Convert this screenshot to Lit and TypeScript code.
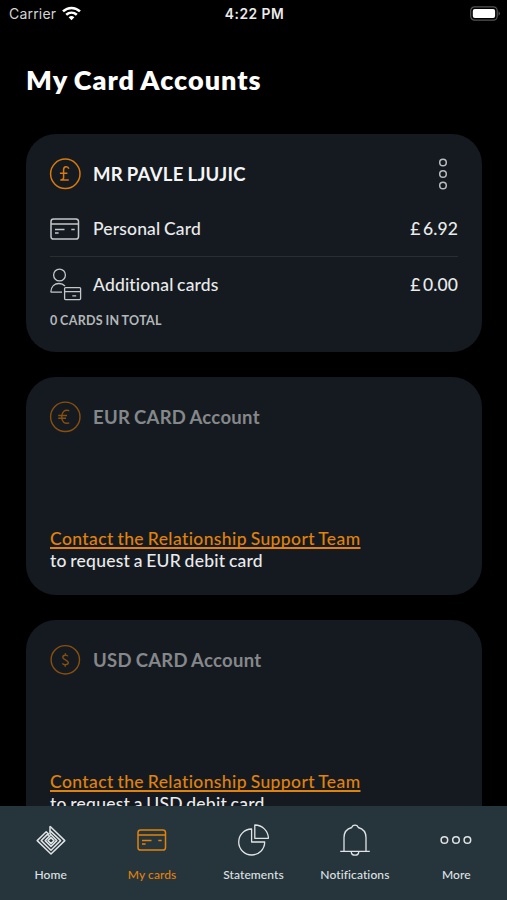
import { LitElement, html, css, svg } from "lit";
import { customElement, property } from "lit/decorators.js";

const cardGlyph = svg`
  <rect x="1" y="1" width="27.5" height="20" rx="2.6"/>
  <path d="M1 6.1H28.5M5 11.5H14.5M5 15H8.6M21.3 11.5H24.7"/>`;

const glyphs: Record<string, unknown> = {
  home: svg`<svg width="30" height="32" viewBox="0 0 30 32" stroke-width="1.5">
    <path d="M14 2.2 28.8 16.6 15 30 1.2 16.6 10.2 7.8 13 10.4"/>
    <path d="M14 2.2V6.6L24.6 16.6 15 26.2 5.2 16.6 11.4 10.4 12.8 11.6"/>
    <path d="M14 6.6V9.8L20.8 16.6 15 22.4 9.2 16.6 14.4 11.4"/>
    <path d="M15 13.6 18 16.6 15 19.6 12 16.6Z"/></svg>`,
  cards: svg`<svg width="30" height="22" viewBox="0 0 30 22" stroke-width="1.5">${cardGlyph}</svg>`,
  statements: svg`<svg width="34" height="34" viewBox="0 0 34 34" stroke-width="1.3">
    <path d="M15.6 6A13 13 0 1 0 28.7 19H15.6ZM18.8 2A13.5 13.5 0 0 1 32.4 15.3H18.8Z"/></svg>`,
  bell: svg`<svg width="32" height="34" viewBox="0 0 32 34" stroke-width="1.3">
    <path d="M1.2 28.4H30.8M5 28.2V14.4C5 9 8.2 5.8 12.8 4.5 13.4 1.3 18.6 1.3 19.2 4.5 23.8 5.8 27 9 27 14.4V28.2M12.2 28.6C12.4 33.4 19.6 33.4 19.8 28.6"/></svg>`,
  more: svg`<svg width="32" height="10" viewBox="0 0 32 10" stroke-width="1.5">
    <circle cx="4.4" cy="5" r="3.3"/><circle cx="16" cy="5" r="3.3"/><circle cx="27.4" cy="5" r="3.3"/></svg>`,
  kebab: svg`<svg width="10" height="34" viewBox="0 0 10 34" stroke-width="1.5">
    <circle cx="5" cy="5.5" r="3.3"/><circle cx="5" cy="17" r="3.3"/><circle cx="5" cy="28.5" r="3.3"/></svg>`,
  person: svg`<svg width="32" height="33" viewBox="0 0 32 33" stroke-width="1.3">
    <circle cx="9.5" cy="7" r="5.9"/>
    <path d="M.8 24.2C1 18.5 4.6 15.5 9 15.5 11.6 15.5 13.6 16.5 15 18M.8 24.2H12"/>
    <rect x="14.6" y="19.6" width="16" height="12" rx="1"/><path d="M14.6 23.6H30.6M22.3 27.8H26.2"/></svg>`,
  gbp: svg`<svg width="32" height="32" viewBox="0 0 32 32" stroke-width="1.5">
    <circle cx="15.3" cy="15.8" r="14.7"/><path d="M18.8 10.8C18 8 13.6 8 13.6 11.8V19.5Q13.6 21.6 10.8 21.9H18.8M9.9 15.2H17.4"/></svg>`,
  eur: svg`<svg width="32" height="32" viewBox="0 0 32 32" stroke-width="1.4">
    <circle cx="15.3" cy="15.8" r="14.7"/><path d="M19.3 9.7C14.5 8.3 11.7 11 11.7 15.8S14.5 23.3 19.3 21.9M8.2 14.5H17M8.2 17.2H16"/></svg>`,
  usd: svg`<svg width="32" height="32" viewBox="0 0 32 32" stroke-width="1.4">
    <circle cx="15.3" cy="15.8" r="14.2"/><path d="M17.8 12.3C17 10.6 12.8 10.8 12.8 13.2 12.8 15.8 18.3 15.8 18.3 18.6 18.3 21 13.6 21.4 12.4 19.4M15.4 9.3V11.2M15.2 20.8V22.7"/></svg>`,
};

@customElement("ui-icon")
class UiIcon extends LitElement {
  @property() name = "";
  static styles = css`
    :host { display: flex; }
    svg { display: block; fill: none; stroke: currentColor; stroke-linejoin: round; overflow: visible; }
  `;
  render() { return glyphs[this.name]; }
}

@customElement("status-bar")
class StatusBar extends LitElement {
  static styles = css`
    :host { display: grid; grid-template-columns: 1fr auto 1fr; align-items: center; height: 27px; padding: 0 6px 1px 9px; font-family: Inter, sans-serif; font-size: 14px; color: #d4d4d4; }
    .left { display: flex; align-items: center; gap: 6px; letter-spacing: .2px; }
    .time { font-weight: 600; font-size: 13.8px; letter-spacing: .5px; color: #ececec; margin-right: 1px; }
    .battery { justify-self: end; margin-top: -1px; }
    svg { display: block; }
  `;
  render() {
    return html`
      <div class="left"><span>Carrier</span>
        <svg width="19" height="15" viewBox="0 0 19 15" fill="none" stroke="#fff" stroke-width="2.6">
          <path d="M1 5.4C6 .8 13 .8 18 5.4M4.2 8.8C7.4 6 11.6 6 14.8 8.8"/>
          <path d="M6.6 11.2Q9.5 8.9 12.4 11.2L9.5 14.2Z" fill="#fff" stroke="none"/></svg></div>
      <div class="time">4:22 PM</div>
      <svg class="battery" width="31" height="15" viewBox="0 0 31 15">
        <rect x=".7" y=".9" width="26.5" height="13.2" rx="3.8" fill="none" stroke="#555" stroke-width="1.2"/>
        <rect x="2.8" y="3" width="22.3" height="9" rx="2" fill="#fff"/>
        <path d="M28.6 5.2Q31 7.5 28.6 9.8Z" fill="#666"/></svg>`;
  }
}

const cardStyles = css`
  :host { display: block; }
  .card { box-sizing: border-box; height: 218px; padding: 24px; border-radius: 30px; background: #151a20; display: flex; flex-direction: column; }
  .head { display: grid; grid-template-columns: 43px 1fr auto; align-items: center; height: 32px; }
  .title { font-size: 18.5px; font-weight: 700; letter-spacing: .3px; word-spacing: -1px; white-space: nowrap; }
`;

@customElement("account-card")
class AccountCard extends LitElement {
  static styles = [cardStyles, css`
    .card { padding-top: 23px; }
    .icon { color: #d87a0c; }
    .title { color: #f4f5f6; }
    .menu { color: #b9bcbf; margin-right: 10px; }
    .row { display: grid; grid-template-columns: 43px 1fr auto; align-items: center; font-size: 17.5px; font-weight: 500; color: #e9ebec; }
    .row ui-icon { color: #c3c7ca; }
    .personal { height: 68px; border-bottom: 1px solid #292e33; box-sizing: border-box; padding-top: 12px; }
    .additional { height: 55px; margin-bottom: 2px; }
    .total { font-size: 12.5px; font-weight: 700; line-height: 14px; color: #b4b7ba; letter-spacing: .3px; word-spacing: -.8px; }
    .pl { letter-spacing: .16px; word-spacing: -1px; }
    .al { letter-spacing: .16px; word-spacing: -1px; }
    .amount { letter-spacing: .1px; word-spacing: -2px; }
  `];
  render() {
    return html`<section class="card">
      <div class="head"><ui-icon class="icon" name="gbp"></ui-icon><span class="title">MR PAVLE LJUJIC</span><ui-icon class="menu" name="kebab"></ui-icon></div>
      <div class="row personal"><ui-icon name="cards"></ui-icon><span class="pl">Personal Card</span><span class="amount">£ 6.92</span></div>
      <div class="row additional"><ui-icon name="person"></ui-icon><span class="al">Additional cards</span><span class="amount">£ 0.00</span></div>
      <div class="total">0 CARDS IN TOTAL</div>
    </section>`;
  }
}

@customElement("request-card")
class RequestCard extends LitElement {
  @property() currency = "EUR";
  static styles = [cardStyles, css`
    .card { padding-bottom: 23px; }
    .icon { color: #88500f; }
    .title { color: #85888b; }
    .note { margin-top: auto; font-size: 17.5px; font-weight: 500; line-height: 22px; color: #e9ebec; white-space: nowrap; word-spacing: -1px; }
    .link { color: #e0820c; letter-spacing: .39px; text-decoration: underline; text-decoration-thickness: 1.5px; text-underline-offset: 2px; text-decoration-skip-ink: none; }
    .rq { letter-spacing: .22px; }
  `];
  render() {
    return html`<section class="card">
      <div class="head"><ui-icon class="icon" name=${this.currency.toLowerCase()}></ui-icon><span class="title">${this.currency} CARD Account</span></div>
      <div class="note"><div><span class="link">Contact the Relationship Support Team</span></div><div class="rq">to request a ${this.currency} debit card</div></div>
    </section>`;
  }
}

@customElement("tab-bar")
class TabBar extends LitElement {
  static styles = css`
    :host { display: grid; grid-template-columns: repeat(5, 1fr); height: 94px; background: #26343b; color: #dfe3e5; flex: none; }
    .tab { display: flex; flex-direction: column; align-items: center; }
    .glyph { height: 68px; display: flex; align-items: center; }
    .label { font-size: 12px; line-height: 16px; margin-top: -7px; font-weight: 500; letter-spacing: .1px; white-space: nowrap; }
    .active { color: #e0820c; }
  `;
  render() {
    const tabs = [["home", "Home"], ["cards", "My cards"], ["statements", "Statements"], ["bell", "Notifications"], ["more", "More"]];
    return tabs.map(([icon, label]) => html`<div class="tab ${icon === "cards" ? "active" : ""}">
      <div class="glyph"><ui-icon name=${icon}></ui-icon></div><span class="label">${label}</span></div>`);
  }
}

@customElement("app-root")
class AppRoot extends LitElement {
  static styles = css`
    :host { display: flex; flex-direction: column; height: 900px; overflow: hidden; background: #000; font-family: Lato, sans-serif; font-variant-ligatures: none; }
    .heading { margin: 0; padding: 34px 26px 0; height: 72px; line-height: 36px; font-size: 27px; font-weight: 800; letter-spacing: 1px; word-spacing: -1px; color: #fff; }
    .list { flex: 1; min-height: 0; overflow: hidden; padding: 0 25px 0 26px; display: flex; flex-direction: column; gap: 25px; }
    account-card, request-card { flex: none; }
  `;
  render() {
    return html`<status-bar></status-bar>
      <h1 class="heading">My Card Accounts</h1>
      <main class="list"><account-card></account-card>
        <request-card currency="EUR"></request-card><request-card currency="USD"></request-card></main>
      <tab-bar></tab-bar>`;
  }
}
